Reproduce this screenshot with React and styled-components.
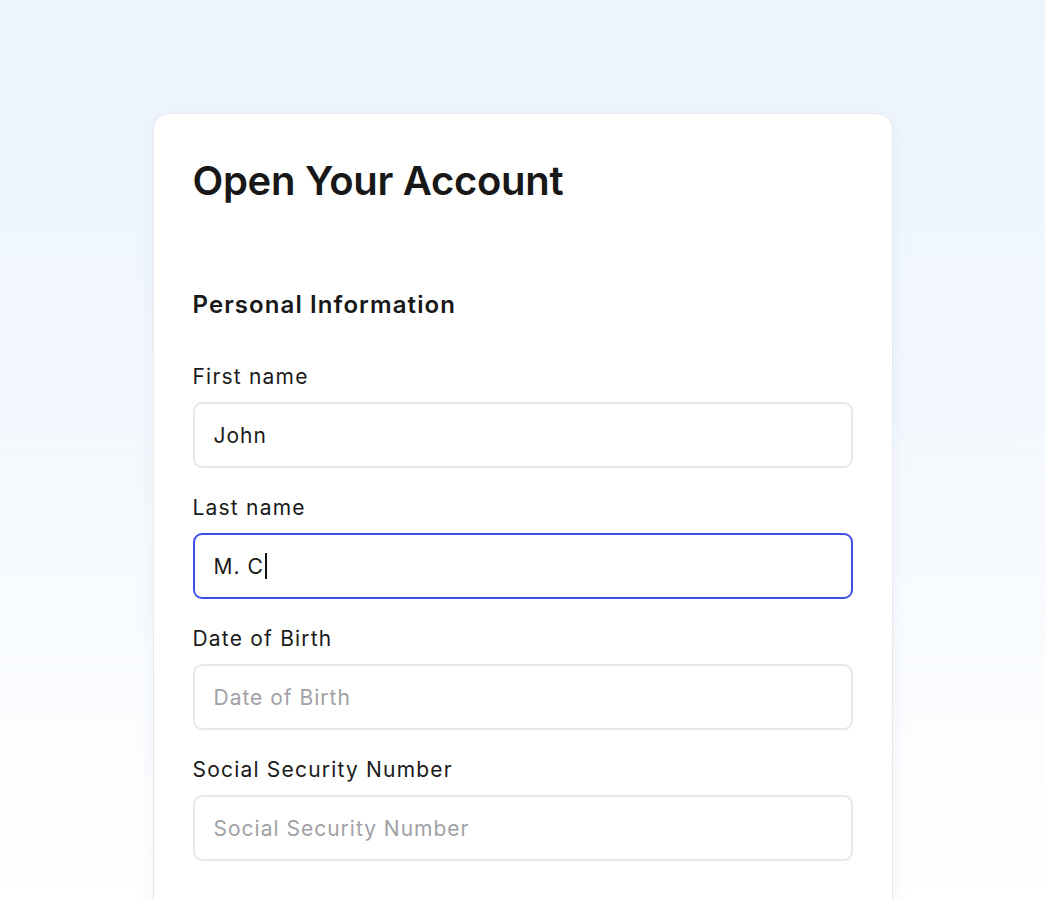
import styled, { createGlobalStyle } from "styled-components";

const GlobalStyle = createGlobalStyle`
  html, body {
    margin: 0;
    padding: 0;
  }
  body {
    font-family: Inter, "Noto Sans", sans-serif;
    background: linear-gradient(180deg, #edf4fe 0%, #f3f8fe 45%, #ffffff 100%);
    min-height: 900px;
  }
`;

const Page = styled.div`
  display: flex;
  justify-content: center;
  padding-top: 113px;
  height: 787px;
  overflow: hidden;
`;

const Card = styled.div`
  width: 660px;
  padding: 40px 39px 40px 39px;
  background: #ffffff;
  border: 1px solid #e6e8ee;
  border-radius: 16px;
  box-shadow: 0 4px 18px rgba(30, 50, 90, 0.05);
  height: 900px;
`;

const Title = styled.h1`
  margin: 0 0 81px;
  font-size: 40px;
  line-height: 54px;
  font-weight: 600;
  color: #181818;
  letter-spacing: -0.3px;
`;

const SectionTitle = styled.h2`
  margin: 0 0 41px;
  font-size: 24px;
  line-height: 32px;
  font-weight: 600;
  color: #181818;
  letter-spacing: 1.1px;
`;

const Fields = styled.div`
  display: flex;
  flex-direction: column;
  gap: 25px;
`;

const Field = styled.label`
  display: flex;
  flex-direction: column;
  gap: 10px;
`;

const Label = styled.span`
  font-size: 21px;
  line-height: 30px;
  font-weight: 400;
  color: #1a1a1a;
  letter-spacing: 1.2px;
`;

const Input = styled.input`
  box-sizing: border-box;
  width: 100%;
  height: 66px;
  padding: 0 19px;
  font-family: Inter, "Noto Sans", sans-serif;
  font-size: 21px;
  letter-spacing: 1px;
  color: #1a1a1a;
  background: #ffffff;
  border: 2px solid #e6e8ee;
  border-radius: 9px;
  outline: none;

  &::placeholder {
    color: #a1a1a6;
  }
`;

const ActiveInput = styled.div`
  box-sizing: border-box;
  display: flex;
  align-items: center;
  height: 66px;
  padding: 0 19px;
  font-size: 21px;
  letter-spacing: 1px;
  color: #1a1a1a;
  border: 2px solid #3f50e6;
  border-radius: 9px;
`;

const Caret = styled.span`
  display: inline-block;
  width: 2px;
  height: 26px;
  margin-left: 1px;
  background: #111;
`;

export default function App() {
  return (
    <>
      <GlobalStyle />
      <Page>
        <Card>
          <Title>Open Your Account</Title>
          <SectionTitle>Personal Information</SectionTitle>
          <Fields>
            <Field>
              <Label>First name</Label>
              <Input defaultValue="John" />
            </Field>
            <Field>
              <Label>Last name</Label>
              <ActiveInput>
                M. C<Caret />
              </ActiveInput>
            </Field>
            <Field>
              <Label>Date of Birth</Label>
              <Input placeholder="Date of Birth" />
            </Field>
            <Field>
              <Label>Social Security Number</Label>
              <Input placeholder="Social Security Number" />
            </Field>
          </Fields>
        </Card>
      </Page>
    </>
  );
}
